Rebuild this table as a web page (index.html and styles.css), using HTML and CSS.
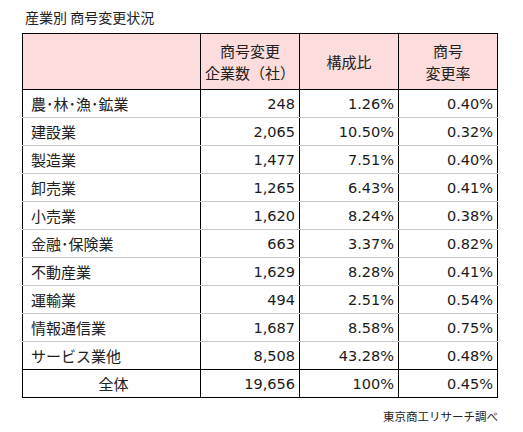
FILE: index.html
```html
<!DOCTYPE html>
<html lang="ja">
<head>
    <meta charset="UTF-8">
    <title>産業別 商号変更状況</title>
    <link rel="stylesheet" href="styles.css">
</head>
<body>
    <div class="report">
        <h1 class="report-title">産業別 商号変更状況</h1>

        <table class="stats">
            <colgroup>
                <col class="col-name">
                <col class="col-num">
                <col class="col-num">
                <col class="col-num">
            </colgroup>
            <thead>
                <tr>
                    <th></th>
                    <th>商号変更<br>企業数（社）</th>
                    <th>構成比</th>
                    <th>商号<br>変更率</th>
                </tr>
            </thead>
            <tbody>
                <tr><td>農･林･漁･鉱業</td><td>248</td><td>1.26%</td><td>0.40%</td></tr>
                <tr><td>建設業</td><td>2,065</td><td>10.50%</td><td>0.32%</td></tr>
                <tr><td>製造業</td><td>1,477</td><td>7.51%</td><td>0.40%</td></tr>
                <tr><td>卸売業</td><td>1,265</td><td>6.43%</td><td>0.41%</td></tr>
                <tr><td>小売業</td><td>1,620</td><td>8.24%</td><td>0.38%</td></tr>
                <tr><td>金融･保険業</td><td>663</td><td>3.37%</td><td>0.82%</td></tr>
                <tr><td>不動産業</td><td>1,629</td><td>8.28%</td><td>0.41%</td></tr>
                <tr><td>運輸業</td><td>494</td><td>2.51%</td><td>0.54%</td></tr>
                <tr><td>情報通信業</td><td>1,687</td><td>8.58%</td><td>0.75%</td></tr>
                <tr><td>サービス業他</td><td>8,508</td><td>43.28%</td><td>0.48%</td></tr>
            </tbody>
            <tfoot>
                <tr><td class="total-label">全体</td><td>19,656</td><td>100%</td><td>0.45%</td></tr>
            </tfoot>
        </table>

        <p class="source">東京商工リサーチ調べ</p>
    </div>
</body>
</html>
```

FILE: styles.css
```css
/* 全体 */
body {
    margin: 0;
    background: #fff;
    color: #222;
    font-family: "Noto Sans CJK JP", "Noto Sans", sans-serif;
}

.report {
    padding: 8px 25px 0 22px;
}

/* タイトル */
.report-title {
    margin: 0 0 6px 3px;
    font-size: 14px;
    font-weight: normal;
    line-height: 19px;
}

/* 表 */
.stats {
    border-collapse: collapse;
    table-layout: fixed;
    width: 476px;
    font-size: 15px;
}

.col-name { width: 178px; }
.col-num  { width: 99px; }

.stats th,
.stats td {
    border-left: 1px solid #000;
    border-right: 1px solid #000;
    padding: 0 4px 0 8px;
    line-height: 22px;
}

.stats th {
    height: 55px;
    background-color: #fcdcdc;
    font-weight: normal;
    text-align: center;
    border-top: 1px solid #000;
    border-bottom: 1px solid #000;
    padding: 0 2px;
}

.stats tbody td {
    height: 27px;
    border-bottom: 1px solid #c8c8c8;
    text-align: right;
}

/* 数値セル */
.stats td + td {
    font-family: "DejaVu Sans", "Noto Sans CJK JP", sans-serif;
    font-size: 14.5px;
    color: #1a1a1a;
}

.stats tbody td:first-child {
    text-align: left;
}

.stats tbody tr:last-child td {
    border-bottom: 1px solid #000;
}

.stats tfoot td {
    height: 27px;
    text-align: right;
    border-bottom: 1px solid #000;
}

.stats tfoot .total-label {
    text-align: center;
}

/* 出典 */
.source {
    margin: 10px 0 0;
    text-align: right;
    font-size: 11.5px;
    line-height: 16px;
}
```
